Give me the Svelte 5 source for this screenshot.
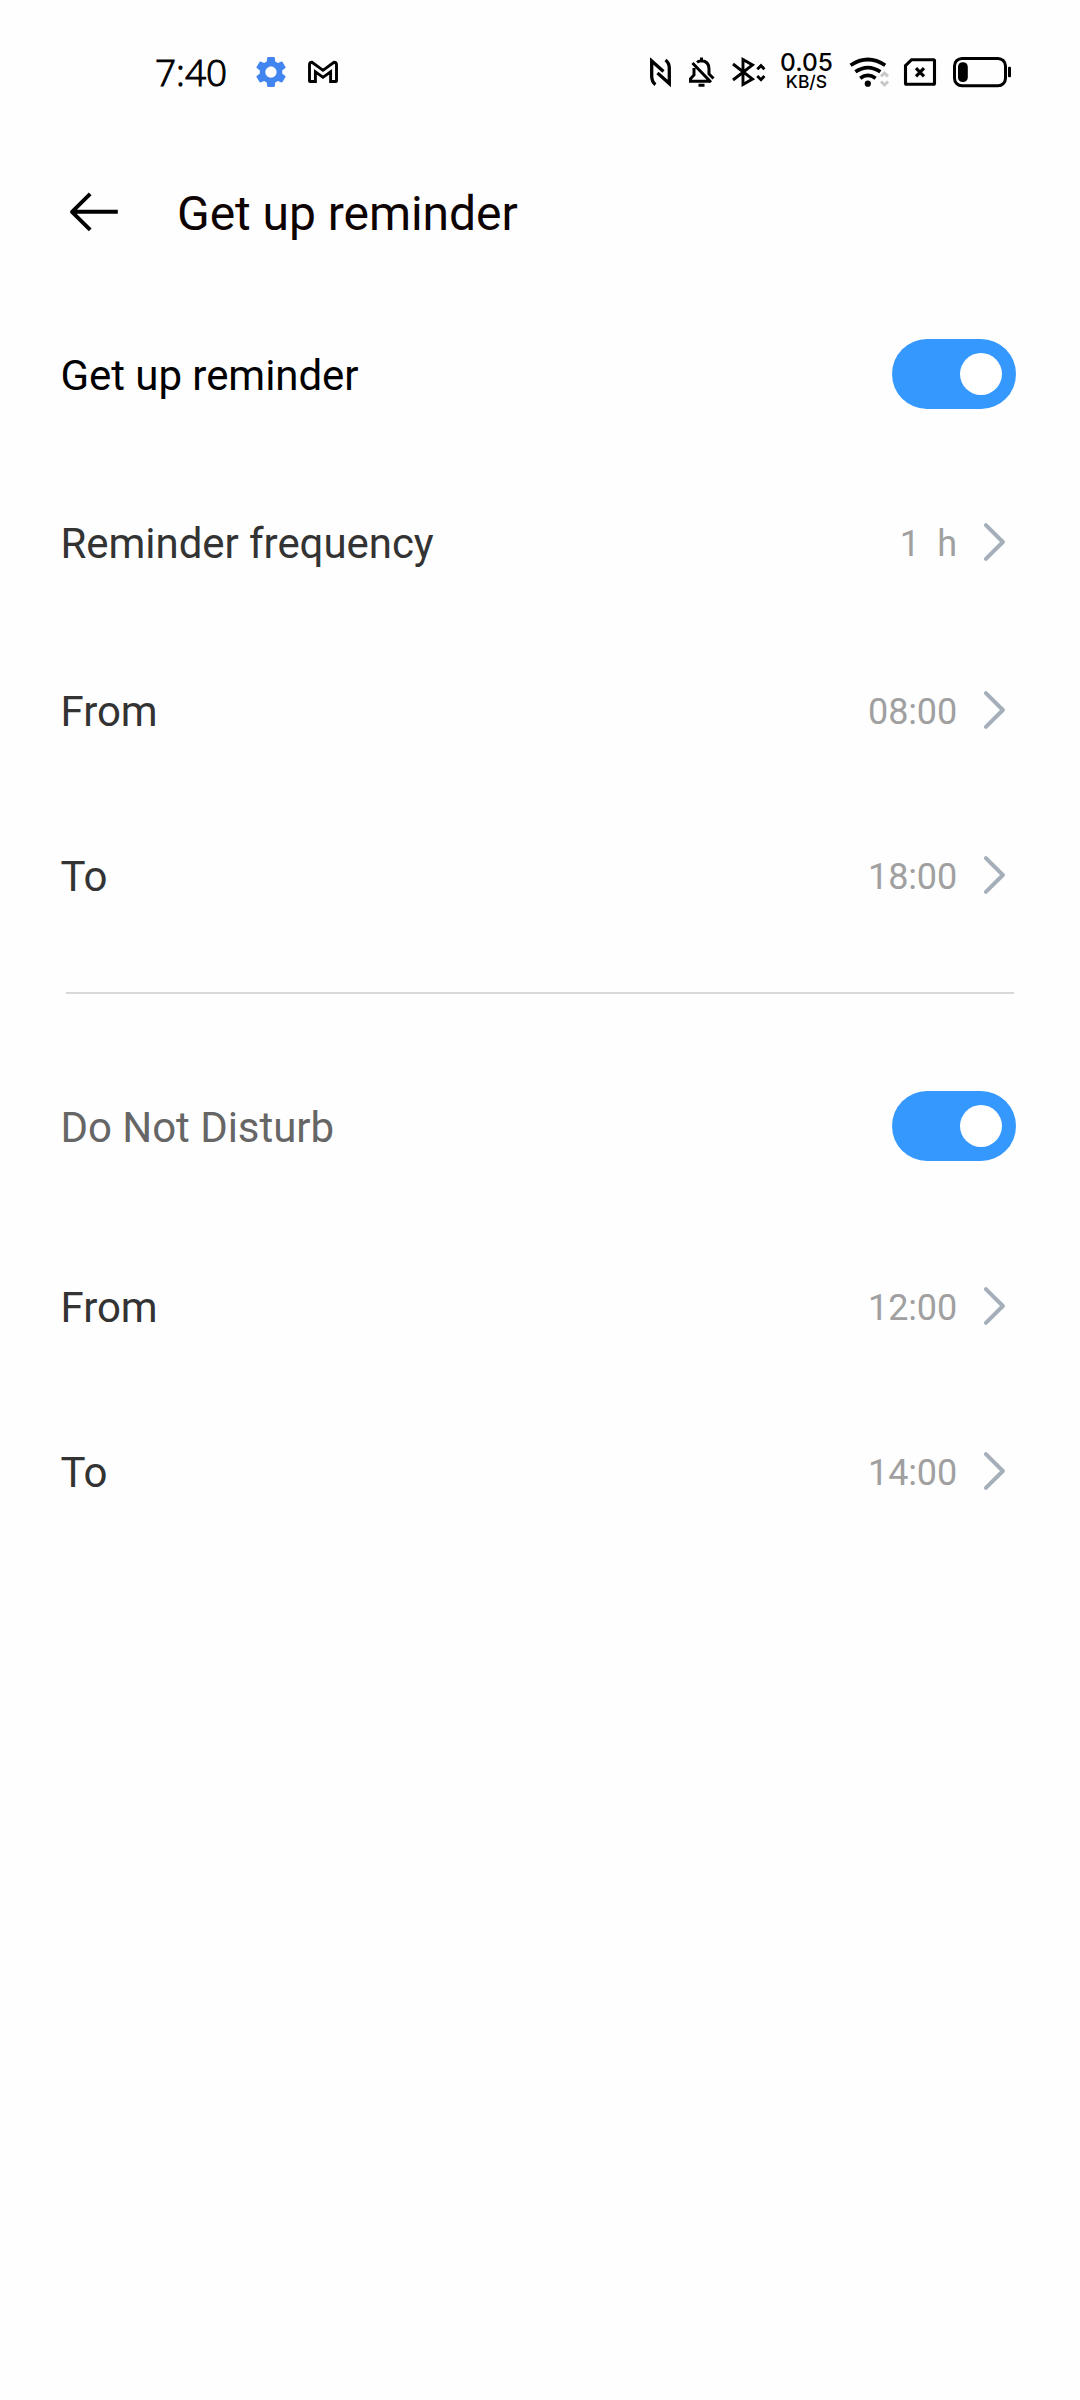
<script lang="ts">
  type Row = { label: string; value?: string; on?: boolean; tone?: string };

  const groups: Row[][] = [
    [
      { label: 'Get up reminder', on: true, tone: 'strong' },
      { label: 'Reminder frequency', value: '1  h' },
      { label: 'From', value: '08:00' },
      { label: 'To', value: '18:00' },
    ],
    [
      { label: 'Do Not Disturb', on: true, tone: 'muted' },
      { label: 'From', value: '12:00' },
      { label: 'To', value: '14:00' },
    ],
  ];

  let settings = $state(groups);
</script>

<div class="screen">
  <div class="status">
    <div class="left">
      <span class="time">7:40</span>
      <svg width="30" height="30" viewBox="2.4 2.4 19.2 19.2" fill="#4285f0">
        <path d="M19.14 12.94c.04-.3.06-.61.06-.94 0-.32-.02-.64-.07-.94l2.03-1.58c.18-.14.23-.41.12-.61l-1.92-3.32c-.12-.22-.37-.29-.59-.22l-2.39.96c-.5-.38-1.03-.7-1.62-.94l-.36-2.54c-.04-.24-.24-.41-.48-.41h-3.84c-.24 0-.43.17-.47.41l-.36 2.54c-.59.24-1.13.57-1.62.94l-2.39-.96c-.22-.08-.47 0-.59.22L2.74 8.87c-.12.21-.08.47.12.61l2.03 1.58c-.05.3-.09.63-.09.94s.02.64.07.94l-2.03 1.58c-.18.14-.23.41-.12.61l1.92 3.32c.12.22.37.29.59.22l2.39-.96c.5.38 1.03.7 1.62.94l.36 2.54c.05.24.24.41.48.41h3.84c.24 0 .44-.17.47-.41l.36-2.54c.59-.24 1.13-.56 1.62-.94l2.39.96c.22.08.47 0 .59-.22l1.92-3.32c.12-.22.07-.47-.12-.61l-2.02-1.58zM12 15.6c-1.98 0-3.6-1.62-3.6-3.6s1.62-3.6 3.6-3.6 3.6 1.62 3.6 3.6-1.62 3.6-3.6 3.6z" />
      </svg>
      <svg class="line" width="30" height="24" viewBox="0 0 30 24" stroke-width="2.9">
        <path d="M1.5 21V5Q1.5 2.3 4 2.3L15 10.3 26 2.3Q28.5 2.3 28.5 5V21Q28.5 21.5 28 21.5H22.6V11.8L15 17.3 7.4 11.8V21.5H2Q1.5 21.5 1.5 21z" />
      </svg>
    </div>

    <div class="right">
      <svg class="line" width="22" height="36" viewBox="0 0 22 36" stroke-width="3.3">
        <path d="M5.5 30.5Q1.7 28 1.7 22V7L13.5 17.5" />
        <path d="M15.5 6Q19.3 9 19.3 14V29.5L7.5 19" />
      </svg>
      <svg class="line" width="26" height="36" viewBox="0 0 26 36" stroke-width="3">
        <path d="M5 14V21L1.5 24.8V27.3H20.5M8 8.4Q10 6.8 12.5 6.8Q20 7.3 20 15V20L24.5 24.5M12.5 3.5V7M9.5 31.3H15.5M3.5 9L22 28.2" />
      </svg>
      <svg class="line" width="32" height="36" viewBox="0 0 32 36" stroke-width="2.9">
        <path d="M1 10L20.5 25L11 30.5V5.5L20.5 11L1 26M25.3 15.2L29 11.6L32.4 15.2M25.3 22L29 25.7L32.4 22" />
      </svg>
      <div class="speed">
        <span class="rate">0.05</span>
        <span class="unit">KB/S</span>
      </div>
      <svg class="line" width="38" height="36" viewBox="0 0 38 36" stroke-width="3.7">
        <path d="M1.6 11.2Q18.8 -.2 36.2 11.2M6.4 17.8Q18.8 9.3 31.4 17.8M11.2 24.2Q18.8 18.5 26.6 24.2" />
        <circle cx="18.8" cy="29.7" r="3.1" fill="#000" stroke="none" />
        <path class="idle" d="M32 22.3L35.5 19L39 22.3M32 27.5L35.5 31L39 27.5" />
      </svg>
      <svg class="line" width="32" height="36" viewBox="0 0 32 36" stroke-width="3.1">
        <path d="M7.6 5.7H29.5Q30.5 5.7 30.5 6.7V29.3Q30.5 30.3 29.5 30.3H2.5Q1.5 30.3 1.5 29.3V11.7z" />
        <path d="M12 14.2L20 22.4M20 14.2L12 22.4" />
      </svg>
      <svg class="line" width="58" height="36" viewBox="0 0 58 36" stroke-width="3">
        <rect x="1.5" y="4.4" width="51" height="27.4" rx="7.5" />
        <rect x="5" y="8.2" width="9.8" height="19.8" rx="4.6" fill="#000" stroke="none" />
        <rect x="55" y="12.8" width="3" height="10.4" rx="1" fill="#000" stroke="none" />
      </svg>
    </div>
  </div>

  <header>
    <button class="back" aria-label="Back">
      <svg class="line" width="48" height="40" viewBox="0 0 48 40" stroke-width="3.9">
        <path d="M47.8 19.8H2M20.2 1.8L2 19.8L20.2 37.8" stroke-linejoin="round" />
      </svg>
    </button>
    <h1>Get up reminder</h1>
  </header>

  {#each settings as group, i (i)}
    <section>
      {#each group as row (row.label)}
        <div class="row" class:switch={row.value === undefined}>
          <span class="label {row.tone ?? ''}">{row.label}</span>
          {#if row.value !== undefined}
            <span class="value">{row.value}</span>
            <svg class="chevron" width="22" height="38" viewBox="0 0 22 38">
              <path d="M1.9 2.2L18.9 19L1.9 35.8" />
            </svg>
          {:else}
            <button class="toggle" class:on={row.on} role="switch" aria-checked={row.on} aria-label={row.label} onclick={() => (row.on = !row.on)}>
              <span class="knob"></span>
            </button>
          {/if}
        </div>
      {/each}
    </section>
  {/each}
</div>

<style>
  :global(body) { background: #fefefe; }
  .screen { box-sizing: border-box; width: 1080px; height: 2400px; background: #fefefe; font-family: Roboto, "Noto Sans", sans-serif; }
  svg { display: block; flex: none; overflow: visible; }
  button { border: none; padding: 0; background: none; cursor: pointer; }
  .line { fill: none; stroke: #000; }

  .status { display: flex; justify-content: space-between; align-items: center; box-sizing: border-box; height: 144px; padding: 0 69px 0 154px; }
  .left { display: flex; align-items: center; gap: 22px; }
  .time { width: 79px; padding: 0 0 2px 1px; font: 300 37px/43px "Open Sans", "Noto Sans", sans-serif; color: #000; -webkit-text-stroke: 1px #000; }
  .right { display: flex; align-items: center; gap: 17px; }
  .speed { display: flex; flex-direction: column; align-items: center; width: 51px; font-family: Inter, sans-serif; font-weight: 500; color: #000; }
  .rate { font-size: 24.5px; line-height: 19px; }
  .unit { font-size: 17.5px; line-height: 19px; }
  .idle { stroke: #c8c8c8; stroke-width: 3; }

  header { display: flex; align-items: center; height: 136px; padding-left: 70px; }
  .back { margin-right: 59px; }
  h1 { margin: 0; padding-top: 2px; font-size: 48px; font-weight: 400; letter-spacing: -0.05px; color: #0d0303; }

  section { padding: 10px 64px 36px 60px; }
  section + section { padding-top: 48px; }
  section + section::before { content: ''; display: block; height: 2px; margin: -48px 2px 48px 6px; background: #d8d8d8; }
  .row { display: flex; align-items: center; height: 168px; }
  .row:last-child { height: 162px; }
  section + section .switch { margin-bottom: 12px; }
  .label { flex: 1; padding: 3px 0 0 0.5px; font-size: 42px; letter-spacing: -0.05px; color: #333; }
  .strong { color: #000; }
  .muted { color: #666; }
  .value { padding-top: 3px; font-size: 36px; letter-spacing: -0.15px; color: #a0a0a0; white-space: pre; }
  .chevron { margin: 0 10px 0 27px; }
  .chevron path { fill: none; stroke: #a5afb9; stroke-width: 4; stroke-linecap: round; stroke-linejoin: round; }
  .toggle { display: flex; align-items: center; box-sizing: border-box; width: 124px; height: 70px; padding: 0 14px; border-radius: 35px; background: #d0d0d0; }
  .toggle.on { justify-content: flex-end; background: #3498ff; }
  .knob { width: 42px; height: 42px; border-radius: 50%; background: #fff; }
</style>
